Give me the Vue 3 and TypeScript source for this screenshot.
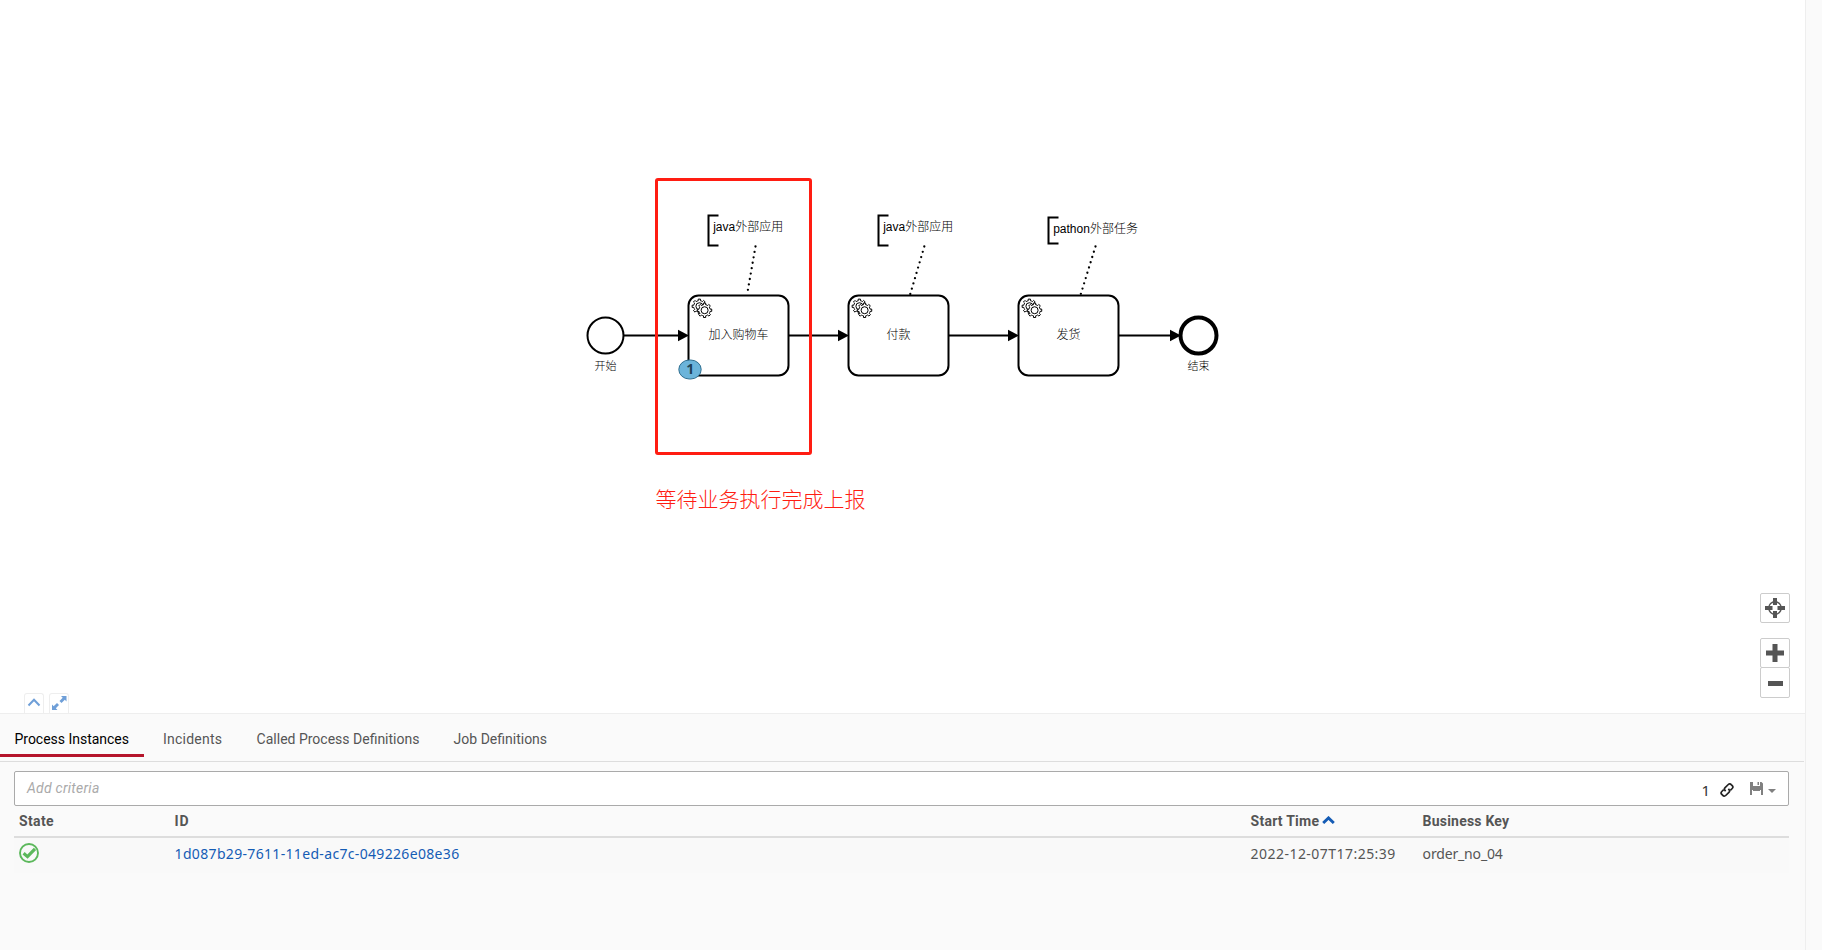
<script setup lang="ts">
interface Task { x: number; label: string }
interface Note { x: number; top: number; bottom: number; text: string; baseline: number; toX: number; fromX: number }

const tasks: Task[] = [
  { x: 688.5, label: '加入购物车' },
  { x: 848.5, label: '付款' },
  { x: 1018.5, label: '发货' },
]

const notes: Note[] = [
  { x: 708.5, top: 215.5, bottom: 245.5, text: 'java外部应用', baseline: 231, fromX: 747, toX: 755.5 },
  { x: 878.5, top: 215.5, bottom: 245.5, text: 'java外部应用', baseline: 231, fromX: 910, toX: 924.3 },
  { x: 1048.5, top: 217.5, bottom: 243.5, text: 'pathon外部任务', baseline: 233, fromX: 1080.5, toX: 1095.5 },
]

const flows = [
  { from: 624, to: 689 },
  { from: 789, to: 849 },
  { from: 949, to: 1019 },
  { from: 1119, to: 1181 },
]

const gear =
  'v-1.71335c.352326-.0705.703932-.17838 1.047628-.32133.344416-.14465.665822-.32133.966377-.52145l1.19431 1.18005 1.567487-1.57688-1.195028-1.18014c.403376-.61394.683079-1.29908.825447-2.01824l1.622133-.01v-2.2196l-1.636514.01c-.07333-.35153-.178319-.70024-.323564-1.04372-.145244-.34406-.321407-.6644-.522735-.96217l1.131035-1.13631-1.583305-1.56293-1.129598 1.13589c-.614052-.40108-1.302883-.68093-2.022633-.82247l.0093-1.61852h-2.241173l.0042 1.63124c-.353763.0736-.705369.17977-1.049785.32371-.344415.14437-.665102.32092-.9635.52006l-1.16986-1.15823-1.56677 1.5792 1.16843 1.15669c-.40266.61283-.68308 1.29797-.82473 2.01713l-1.6588.003v2.22174l1.67246-.006c.07333.35077.17976.70243.32429 1.04472.14524.34448.3214.6644.52273.96066l-1.19934 1.19723 1.58402 1.56011 1.19647-1.19348c.61405.40346 1.30288.68232 2.02335.82331l.00072 1.69892z'

const tabs = ['Process Instances', 'Incidents', 'Called Process Definitions', 'Job Definitions']
const activeTab = 'Process Instances'

const instance = {
  id: '1d087b29-7611-11ed-ac7c-049226e08e36',
  start: '2022-12-07T17:25:39',
  key: 'order_no_04',
}
</script>

<template>
  <div class="page">
    <main class="content">
      <section class="viewer">
        <svg class="diagram" width="1805" height="713" viewBox="0 0 1805 713">
          <g class="shape">
            <circle cx="605.5" cy="335.5" r="18" />
            <circle cx="1198.5" cy="335.5" r="18" class="end" />
          </g>

          <g v-for="t in tasks" :key="t.x">
            <rect class="shape" :x="t.x" y="295.5" width="100" height="80" rx="10" />
            <g class="gear" :transform="`translate(${t.x} 295.5)`">
              <path :d="'M12 18' + gear" />
              <circle cx="10.9" cy="10.73" r="3.5" />
              <path :d="'M17.2 22' + gear" />
              <circle cx="16.1" cy="14.73" r="3.5" />
            </g>
            <text class="label" :x="t.x + 50" y="339.4" text-anchor="middle">{{ t.label }}</text>
          </g>

          <g v-for="f in flows" :key="f.from">
            <line class="flow" :x1="f.from" y1="335.5" :x2="f.to - 8" y2="335.5" />
            <path :d="`M${f.to} 335.5l-11-5.7v11.4z`" />
          </g>

          <g v-for="n in notes" :key="n.x">
            <path class="bracket" :d="`M${n.x + 10} ${n.top}h-10V${n.bottom}h10`" />
            <text class="label" :x="n.x + 4.7" :y="n.baseline">{{ n.text }}</text>
            <line class="link" :x1="n.toX" y1="246.5" :x2="n.fromX" y2="295" />
          </g>

          <text class="label small" x="605.5" y="370" text-anchor="middle">开始</text>
          <text class="label small" x="1198.5" y="370" text-anchor="middle">结束</text>

          <rect class="badge" x="678.8" y="360" width="22.4" height="19" rx="10.5" ry="9.5" />
          <text class="count" x="690.3" y="374.3" text-anchor="middle">1</text>

          <rect class="frame" x="656.5" y="179.5" width="154" height="274" rx="1.5" />
          <text class="remark" x="655.5" y="507">等待业务执行完成上报</text>
        </svg>

        <div class="zoom">
          <button class="tool reset" type="button">
            <svg width="20" height="20" viewBox="0 0 20 20">
              <circle cx="10" cy="10" r="6.200" fill="none" stroke="#555" stroke-width="1.4" />
              <path d="M8 0h4v7H8zM8 13h4v7H8zM0 8h7.5v4H0zM12.5 8H20v4h-7.5z" fill="#555" />
            </svg>
          </button>
          <button class="tool" type="button">
            <svg width="18" height="18" viewBox="0 0 18 18"><path d="M6.5 0h5v6.5H18v5h-6.5V18h-5v-6.5H0v-5h6.5z" fill="#555" /></svg>
          </button>
          <button class="tool minus" type="button">
            <svg width="18" height="18" viewBox="0 0 18 18"><path d="M2 7h15v5H2z" fill="#555" /></svg>
          </button>
        </div>

        <div class="toggles">
          <button type="button">
            <svg width="18" height="18" viewBox="0 0 18 18"><path d="M3.500 11.500 9 5.700l5.500 5.800" fill="none" stroke="#6f9fd8" stroke-width="2" /></svg>
          </button>
          <button type="button">
            <svg width="18" height="18" viewBox="0 0 18 18">
              <path d="M11 2h5.500v5.500l-1.700-1.700-3.300 3.200-2-2 3.200-3.300zM2 10.500V16h5.500l-1.700-1.700 3.200-3.200-2-2-3.300 3.200z" fill="#6f9fd8" />
            </svg>
          </button>
        </div>
      </section>

      <section class="panel">
        <nav class="tabs">
          <a v-for="(t, i) in tabs" :key="t" :class="['tab', 'tab-' + i, { active: t === activeTab }]">{{ t }}</a>
        </nav>

        <div class="search">
          <span class="hint">Add criteria</span>
          <span class="total">1</span>
          <svg class="chain" width="14" height="14" viewBox="0 0 14 14" fill="none" stroke="#222" stroke-width="1.700">
            <path d="M5.600 8.200 4.900 7.300a2 2 0 0 1 .2-2.700L8.300 1.500a2 2 0 0 1 2.900.1l1.200 1.200a2 2 0 0 1-.2 2.700L10.300 7.300" />
            <path d="M8.400 5.800l.7.900a2 2 0 0 1-.2 2.700l-3.200 3.100a2 2 0 0 1-2.900-.1l-1.200-1.200a2 2 0 0 1 .2-2.700L3.700 6.700" />
          </svg>
          <svg class="disk" width="13" height="13" viewBox="0 0 13 13">
            <path d="M0 0h3v4.500h7V0h1.500L13 1.500V13h-2V8H2v5H0z" fill="#808080" />
            <path d="M3 4h7v5H3zM7.500 0h1.500v3H7.500z" fill="#808080" />
          </svg>
          <svg class="caret" width="8" height="4" viewBox="0 0 8 4"><path d="M0 0h8L4 4z" fill="#808080" /></svg>
        </div>

        <div class="grid head">
          <span class="h-state">State</span>
          <span class="h-id">ID</span>
          <span class="h-start">Start Time<svg width="13" height="8" viewBox="0 0 13 8"><path d="M1.200 7 6.500 1.900 11.800 7" fill="none" stroke="#155cb5" stroke-width="2.900" /></svg></span>
          <span class="h-key">Business Key</span>
        </div>
        <div class="grid row">
          <span class="state">
            <svg width="20" height="20" viewBox="0 0 20 20">
              <circle cx="10" cy="10" r="9" fill="none" stroke="#5cb85c" stroke-width="1.900" />
              <path d="M4.600 10.200 8.500 13.600 16 5.800" fill="none" stroke="#5cb85c" stroke-width="3.200" />
            </svg>
          </span>
          <a class="id">{{ instance.id }}</a>
          <span class="start">{{ instance.start }}</span>
          <span class="key">{{ instance.key }}</span>
        </div>
      </section>
    </main>
    <aside class="rail"></aside>
  </div>
</template>

<style scoped>
.page {
  display: flex;
  width: 1822px;
  height: 950px;
  overflow: hidden;
  background: #fafafa;
  color: #555;
  font: 14px/20px Roboto, "Noto Sans CJK SC", sans-serif;
}
.content { width: 1805px; display: flex; flex-direction: column; }
.rail { flex: 1; box-sizing: border-box; border-left: 1px solid #eee; background: #fafafa; }

.viewer { position: relative; height: 713px; background: #fff; }
.diagram { display: block; }
.shape { fill: #fff; stroke: #000; stroke-width: 2; }
.end { stroke-width: 4; }
.gear { fill: #fff; stroke: #000; stroke-width: 1; }
.flow { stroke: #000; stroke-width: 1.8; }
.bracket { fill: none; stroke: #000; stroke-width: 2; }
.link { stroke: #000; stroke-width: 2.3; stroke-dasharray: 0 5.500; stroke-linecap: round; }
.label { font: 300 12px "Liberation Sans", "Noto Sans CJK SC", sans-serif; fill: #000; }
.small { font-size: 11px; }
.badge { fill: #6bb4da; stroke: #2f6f90; stroke-width: 1; }
.count { font: bold 14px "Noto Sans", sans-serif; fill: #1f4257; }
.frame { fill: none; stroke: #ff1d12; stroke-width: 3; }
.remark { font: 300 21px "Noto Sans CJK SC", sans-serif; fill: #ff1d12; }

.zoom { position: absolute; right: 15px; top: 593px; width: 30px; }
.tool {
  display: flex;
  align-items: center;
  justify-content: center;
  box-sizing: border-box;
  width: 30px;
  height: 30px;
  padding: 0;
  border: 1px solid #ccc;
  border-radius: 2px;
  background: #fff;
}
.reset { margin-bottom: 15px; }
.tool.minus { height: 31px; margin-top: -1px; }
.toggles { position: absolute; left: 24px; top: 693px; display: flex; gap: 5px; }
.toggles button {
  display: flex;
  box-sizing: border-box;
  width: 20px;
  height: 20px;
  padding: 0;
  border: 1px solid #eee;
  border-bottom: 0;
  border-radius: 3px 3px 0 0;
  background: #fff;
}

.panel { flex: 1; border-top: 1px solid #eee; }
.tabs {
  display: flex;
  height: 47px;
  width: 1804px;
  border-bottom: 1px solid #ddd;
}
.tab { box-sizing: border-box; height: 43px; padding-top: 15px; white-space: nowrap; }
.tab.active { color: #000; border-bottom: 3px solid #b5152b; }
.tab-0 { width: 144px; padding-left: 14.500px; letter-spacing: -0.02px; }
.tab-1 { width: 93px; padding-left: 19px; letter-spacing: 0.24px; }
.tab-2 { width: 197px; padding-left: 19.600px; box-sizing: border-box; }
.tab-3 { padding-left: 19.600px; }

.search {
  display: flex;
  align-items: center;
  box-sizing: border-box;
  width: 1775px;
  height: 35px;
  margin: 9px 0 0 14px;
  padding: 0 12px;
  border: 1px solid #aaa;
  border-radius: 2px;
  background: #fff;
}
.hint { flex: 1; margin-top: -2px; color: #aaa; font-style: italic; letter-spacing: 0.25px; }
.total { margin: 2px 10px 0 0; color: #333; font: 15px/20px "Noto Sans", sans-serif; }
.chain { margin: 3px 16px 0 0; }
.disk { margin-right: 5px; }
.caret { margin-top: 5px; }

.grid {
  display: grid;
  grid-template-columns: 155px 1076px 172px 1fr;
  width: 1775px;
  margin-left: 14px;
}
.grid > * { padding-left: 5.600px; }
.grid > .state, .grid > .h-state { padding-left: 5px; }
.head { height: 30px; line-height: 30px; border-bottom: 2px solid #ddd; font-weight: bold; }
.h-state { letter-spacing: 0.38px; }
.h-id { letter-spacing: 0.8px; }
.h-start { letter-spacing: 0.24px; }
.h-start svg { margin-left: 3px; vertical-align: 2px; }
.h-key { letter-spacing: 0.21px; }
.row { height: 35px; line-height: 31px; background: #f9f9f9; font-family: "Noto Sans", sans-serif; }
.state svg { display: block; margin: 5px 0 0; }
.id { color: #155cb5; letter-spacing: 0.33px; }
.start { letter-spacing: 0.46px; }
.key { letter-spacing: -0.16px; }
</style>
